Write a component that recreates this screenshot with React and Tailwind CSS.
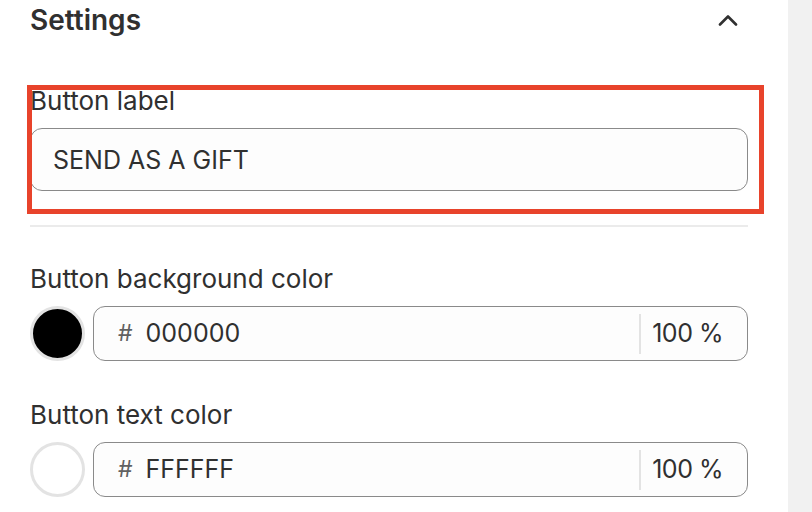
import React, { useState } from "react";

const font = { fontFamily: "Inter, 'Noto Sans', sans-serif" };

const ColorField = ({ label, hex, swatch }) => (
  <div className="flex flex-col">
    <div className="text-[26px] leading-[30px] text-[#303030]">{label}</div>
    <div className="mt-[12px] flex items-center gap-[8px]">
      <div
        className="h-[55px] w-[55px] shrink-0 rounded-full border-[3px] border-[#e3e3e3]"
        style={{ backgroundColor: swatch }}
      />
      <div className="flex h-[55px] flex-1 items-center rounded-[12px] border border-[#8a8a8a] bg-[#fdfdfd] pl-[24px] pr-[24px]">
        <span className="text-[23px] text-[#616161]">#</span>
        <span className="ml-[13px] flex-1 text-[25px] text-[#303030]">{hex}</span>
        <div className="h-[40px] w-[2px] bg-[#e3e3e3]" />
        <span className="ml-[11px] text-[25px] tracking-[-0.5px] text-[#303030]">100 %</span>
      </div>
    </div>
  </div>
);

export default function App() {
  const [open, setOpen] = useState(true);
  const [label, setLabel] = useState("SEND AS A GIFT");

  return (
    <div className="flex h-[512px] w-[812px] overflow-hidden bg-white" style={font}>
      <div className="flex w-[788px] flex-col pl-[30px] pr-[40px]">
        <div className="flex h-[40px] items-center justify-between">
          <h2 className="text-[28px] font-semibold text-[#303030]">Settings</h2>
          <button onClick={() => setOpen(!open)} className="mr-[10px] text-[#303030]">
            <svg width="20" height="12" viewBox="0 0 20 12" fill="none">
              <path d="M2 10.5 L10 2.5 L18 10.5" stroke="currentColor" strokeWidth="2.6" strokeLinecap="round" strokeLinejoin="round" />
            </svg>
          </button>
        </div>

        <div className="relative mt-[46px] flex flex-col pb-[23px]">
          <div className="text-[26px] leading-[30px] text-[#303030]">Button label</div>
          <input
            value={label}
            onChange={(e) => setLabel(e.target.value)}
            className="mt-[12px] h-[63px] w-full rounded-[12px] border border-[#8a8a8a] bg-[#fdfdfd] px-[22px] text-[25px] text-[#303030] outline-none"
          />
          {/* highlight annotation */}
          <div className="pointer-events-none absolute -top-[1px] bottom-0 -left-[3px] -right-[16px] border-[5px] border-[#e8432b]" />
        </div>

        <div className="mt-[11px] h-[2px] w-full bg-[#ebebeb]" />

        <div className="mt-[37px] flex flex-col gap-[39px]">
          <ColorField label="Button background color" hex="000000" swatch="#000000" />
          <ColorField label="Button text color" hex="FFFFFF" swatch="#ffffff" />
        </div>
      </div>
      <div className="flex-1 bg-[#f1f1f1]" />
    </div>
  );
}
